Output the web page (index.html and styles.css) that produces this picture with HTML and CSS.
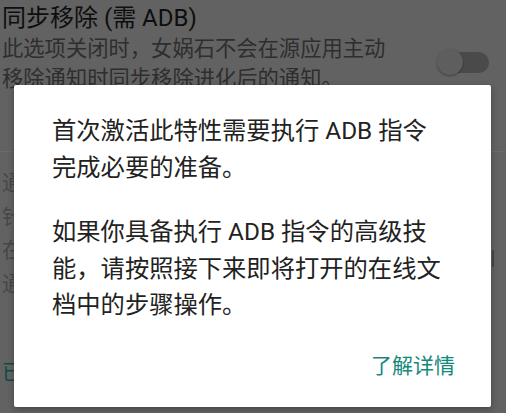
FILE: index.html
```html
<!DOCTYPE html>
<html lang="zh-CN">
<head>
<meta charset="utf-8">
<title>同步移除</title>
<link rel="stylesheet" href="styles.css">
</head>
<body>
<div class="page">
  <div class="pref">
    <div class="pref-text">
      <div class="pref-title">同步移除 (需 ADB)</div>
      <div class="pref-summary">此选项关闭时，女娲石不会在源应用主动<br>移除通知时同步移除进化后的通知。</div>
    </div>
    <div class="switch"><span class="track"></span><span class="thumb"></span></div>
  </div>
  <div class="divider"></div>
  <div class="pref2">
    <div class="pref2-clip">
      <div class="pref2-line first">通知进化后的通知将在这里显示</div>
      <div class="pref2-line">针对这个应用的通知</div>
      <div class="pref2-line">在此处设置通知的处理方式</div>
      <div class="pref2-line">通知将保持原样</div>
      <div class="pref-tail">已启用</div>
    </div>
    <div class="edge-mark"></div>
  </div>
</div>

<div class="dialog">
  <div class="dialog-body">
    <p class="msg">首次激活此特性需要执行 ADB 指令<br>完成必要的准备。</p>
    <p class="msg second">如果你具备执行 ADB 指令的高级技<br>能，请按照接下来即将打开的在线文<br>档中的步骤操作。</p>
  </div>
  <div class="dialog-actions">
    <span class="btn">了解详情</span>
  </div>
</div>
</body>
</html>
```

FILE: styles.css
```css
html, body {
  margin: 0;
  padding: 0;
}
body {
  width: 506px;
  height: 413px;
  overflow: hidden;
  background: #626262;
  font-family: Roboto, "Noto Sans CJK SC", "Noto Sans", sans-serif;
  position: relative;
}
.page {
  display: flex;
  flex-direction: column;
}
.pref {
  display: flex;
  align-items: flex-start;
  justify-content: space-between;
  padding: 3px 17px 0 2px;
  height: 148px;
}
.pref-title {
  font-size: 24px;
  line-height: 30px;
  color: #0e0e0e;
  white-space: nowrap;
}
.pref-summary {
  margin-top: 1px;
  font-size: 21.3px;
  line-height: 29.5px;
  color: #2e2e2e;
  white-space: nowrap;
}
.switch {
  position: relative;
  width: 52px;
  height: 28px;
  margin-top: 46px;
}
.track {
  position: absolute;
  left: 8px;
  top: 3px;
  width: 44px;
  height: 21px;
  border-radius: 11px;
  background: #4a4a4a;
}
.thumb {
  position: absolute;
  left: 0;
  top: 0;
  width: 26px;
  height: 26px;
  border-radius: 50%;
  background: #5e5e5e;
  box-shadow: 0 1px 2px rgba(0,0,0,0.35);
}
.divider {
  height: 1px;
  background: #6a6a6a;
}
.pref2 {
  position: relative;
  padding-left: 2px;
  padding-top: 15px;
}
.pref2-clip {
  width: 12px;
  overflow: hidden;
}
.pref2-line {
  font-size: 21px;
  line-height: 33.5px;
  color: #474747;
  white-space: nowrap;
}
.pref-tail {
  margin-top: 56px;
  font-size: 21px;
  line-height: 30px;
  color: #0c4b42;
  white-space: nowrap;
}
.edge-mark {
  position: absolute;
  left: 492px;
  top: 98px;
  width: 2px;
  height: 17px;
  background: #474747;
}
.dialog {
  position: absolute;
  left: 14px;
  top: 85px;
  width: 477px;
  height: 322px;
  background: #ffffff;
  border-radius: 2px;
  box-shadow: 0 2px 6px rgba(0,0,0,0.3);
  display: flex;
  flex-direction: column;
}
.dialog-body {
  padding: 28px 20px 0 38px;
}
.msg {
  margin: 0;
  font-size: 24.3px;
  line-height: 36.5px;
  color: #222222;
  white-space: nowrap;
}
.msg.second {
  margin-top: 28px;
}
.dialog-actions {
  display: flex;
  justify-content: flex-end;
  padding: 27px 36px 0 0;
}
.btn {
  font-size: 21px;
  line-height: 30px;
  color: #14897a;
}
```
